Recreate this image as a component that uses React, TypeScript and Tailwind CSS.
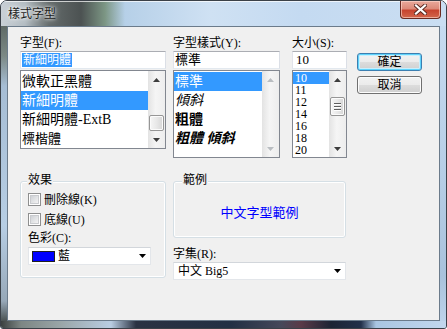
import React from 'react';

const ui = "font-['Liberation_Serif','Noto_Sans_CJK_TC',serif]";

function Arrow({ dir, color }: { dir: 'up' | 'down'; color: string }) {
  return (
    <svg width="7" height="4" viewBox="0 0 7 4">
      <path d={dir === 'up' ? 'M0 4L3.5 0L7 4Z' : 'M0 0L3.5 4L7 0Z'} fill={color} />
    </svg>
  );
}

function ScrollBar({ disabled, thumb, grip }: { disabled?: boolean; thumb?: string; grip?: boolean }) {
  const c = disabled ? '#b9bdc1' : '#3d3d3d';
  return (
    <div className="w-[17px] flex flex-col bg-[linear-gradient(90deg,#e3e3e3,#f5f5f5_45%,#ededed)]">
      <div className="h-[17px] flex items-center justify-center">
        <Arrow dir="up" color={c} />
      </div>
      <div className="flex-1 flex flex-col">
        {thumb && (
          <div
            className={`${thumb} mx-px rounded-[2px] border border-[#969696] bg-[linear-gradient(90deg,#f6f6f6,#e8e8e8_50%,#d6d6d6)] shadow-[inset_0_0_0_1px_#fbfbfb] flex flex-col items-center justify-center gap-[2px]`}
          >
            {grip && (
              <>
                <div className="w-[7px] h-px bg-[#5e5e5e] shadow-[0_1px_0_#fff]" />
                <div className="w-[7px] h-px bg-[#5e5e5e] shadow-[0_1px_0_#fff]" />
                <div className="w-[7px] h-px bg-[#5e5e5e] shadow-[0_1px_0_#fff]" />
              </>
            )}
          </div>
        )}
      </div>
      <div className="h-[17px] flex items-center justify-center">
        <Arrow dir="down" color={c} />
      </div>
    </div>
  );
}

const inputBox =
  'h-[18px] bg-white border border-[#abadb3] border-l-[#e2e3ea] border-r-[#dbdfe6] border-b-[#e3e9ef] flex items-center';

function CheckRow({ label, className }: { label: string; className?: string }) {
  return (
    <div className={`h-[13px] flex items-center gap-[3px] ${className ?? ''}`}>
      <div className="w-[13px] h-[13px] border border-[#8e8f8f] bg-white p-[1px]">
        <div className="w-full h-full border border-[#c9cbce] bg-[linear-gradient(135deg,#cfd2d6,#f3f3f3)]" />
      </div>
      <span className="text-[12px] leading-[14px]">{label}</span>
    </div>
  );
}

function Combo({ className, children }: { className: string; children: React.ReactNode }) {
  return (
    <div className={`${className} h-[18px] bg-white border border-[#e3e6ea] border-t-[#d2d6db] flex items-center`}>
      <div className="flex-1 flex items-center">{children}</div>
      <div className="w-[16px] flex justify-center">
        <svg width="7" height="4" viewBox="0 0 7 4">
          <path d="M0 0L3.5 4L7 0Z" fill="#000" />
        </svg>
      </div>
    </div>
  );
}

const sizes = ['10', '11', '12', '14', '16', '18', '20'];

export default function App() {
  return (
    <div
      className={`${ui} w-[447px] h-[329px] flex flex-col overflow-hidden rounded-t-[7px] rounded-b-[3px] border border-[#3b4148] bg-[#bcd3ea] text-black`}
    >
      {/* Title bar */}
      <div className="h-[25px] flex items-start bg-[linear-gradient(90deg,#c9d0d6_0px,#b3bcc2_24px,#646b6b_48px,#4c5252_80px,#7c9684_104px,#b6d0e8_124px,#cfe1f3_210px,#c4daf1_300px,#cadef2_445px)] shadow-[inset_0_1px_0_rgba(255,255,255,0.7)]">
        <div className="pl-[7px] pt-[5px] text-[12px] leading-[14px] font-['Noto_Sans_CJK_TC',sans-serif] text-[#1c1c1c] [text-shadow:0_0_6px_#ffffff,0_0_3px_#ffffff]">
          樣式字型
        </div>
        <div className="ml-auto mr-[5px] w-[41px] h-[18px] rounded-b-[4px] border border-t-0 border-[#6a2b22] bg-[linear-gradient(180deg,#e9a99b_0%,#dc8a79_45%,#c7442f_55%,#d2664c_100%)] shadow-[inset_0_0_0_1px_rgba(255,220,210,0.6)] flex items-center justify-center">
          <svg width="13" height="11" viewBox="0 0 13 11">
            <path d="M2 1.5L11 9.5M11 1.5L2 9.5" stroke="#5a2a22" strokeWidth="4" strokeLinecap="square" />
            <path d="M2 1.5L11 9.5M11 1.5L2 9.5" stroke="#ffffff" strokeWidth="2.2" strokeLinecap="square" />
          </svg>
        </div>
      </div>

      {/* Middle: frame sides + client */}
      <div className="flex-1 flex">
        <div className="w-[6px] bg-[linear-gradient(180deg,#5f6a66_0px,#7c8985_30px,#a6bdd4_60px,#b7cee4_200px,#97a8b8_275px,#4a5252_295px)]" />
        <div className="flex-1 border border-[#6b7b8b] bg-[#f0f0f0] flex flex-col pl-[12px] pt-[8px]">
          {/* Top row */}
          <div className="flex items-start">
            {/* Font */}
            <div className="w-[146px] flex flex-col">
              <div className="h-[16px] text-[12px] leading-[16px]">字型(F):</div>
              <div className={`${inputBox} pl-[1px]`}>
                <span className="bg-[#3399ff] text-white text-[12px] leading-[14px] px-px">新細明體</span>
              </div>
              <div className="mt-[1px] h-[79px] border border-[#828790] bg-white flex">
                <div className="flex-1 flex flex-col pt-px text-[14px]">
                  <div className="h-[19px] leading-[19px] pl-[1px]">微軟正黑體</div>
                  <div className="h-[19px] leading-[19px] pl-[1px] bg-[#3399ff] text-white">新細明體</div>
                  <div className="h-[19px] leading-[19px] pl-[1px]">新細明體-ExtB</div>
                  <div className="h-[19px] leading-[19px] pl-[1px] text-[13px]">標楷體</div>
                </div>
                <ScrollBar thumb="mt-[27px] h-[16px]" />
              </div>
            </div>

            {/* Style */}
            <div className="ml-[7px] w-[107px] flex flex-col">
              <div className="h-[16px] text-[12px] leading-[16px]">字型樣式(Y):</div>
              <div className={`${inputBox} pl-[1px]`}>
                <span className="text-[13px] leading-[14px]">標準</span>
              </div>
              <div className="mt-[1px] h-[88px] border border-[#828790] bg-white flex">
                <div className="flex-1 flex flex-col pt-px text-[14px]">
                  <div className="h-[19px] leading-[19px] pl-[1px] bg-[#3399ff] text-white">標準</div>
                  <div className="h-[19px] leading-[19px] pl-[1px] italic">傾斜</div>
                  <div className="h-[19px] leading-[19px] pl-[1px] font-bold">粗體</div>
                  <div className="h-[19px] leading-[19px] pl-[1px] font-bold italic">粗體 傾斜</div>
                </div>
                <ScrollBar disabled />
              </div>
            </div>

            {/* Size */}
            <div className="ml-[12px] w-[55px] flex flex-col">
              <div className="h-[16px] text-[12px] leading-[16px]">大小(S):</div>
              <div className={`${inputBox} pl-[3px]`}>
                <span className="text-[13px] leading-[14px]">10</span>
              </div>
              <div className="mt-[1px] h-[88px] border border-[#828790] bg-white flex">
                <div className="flex-1 flex flex-col pt-px text-[12px]">
                  {sizes.map((s, i) => (
                    <div
                      key={s}
                      className={`h-[12px] leading-[12px] pl-[2px] overflow-hidden ${i === 0 ? 'bg-[#3399ff] text-white' : ''}`}
                    >
                      {s}
                    </div>
                  ))}
                </div>
                <ScrollBar thumb="mt-[9px] h-[19px]" grip />
              </div>
            </div>

            {/* Buttons */}
            <div className="ml-[10px] w-[65px] flex flex-col pt-[18px]">
              <button className="h-[18px] rounded-[3px] border border-[#3c7fb1] bg-[linear-gradient(180deg,#f2f2f2_0%,#ebebeb_50%,#dddddd_50%,#cfcfcf_100%)] shadow-[inset_0_0_0_1px_#5fd3fb,inset_0_0_0_2px_#c8effd] text-[12px] leading-[14px]">
                確定
              </button>
              <button className="mt-[5px] h-[18px] rounded-[3px] border border-[#707070] bg-[linear-gradient(180deg,#f2f2f2_0%,#ebebeb_50%,#dddddd_50%,#cfcfcf_100%)] shadow-[inset_0_0_0_1px_#fcfcfc] text-[12px] leading-[14px]">
                取消
              </button>
            </div>
          </div>

          {/* Bottom row */}
          <div className="mt-[23px] flex items-start">
            {/* Effects */}
            <div className="relative w-[146px] h-[97px] rounded-[3px] border border-[#d5dfe5] shadow-[inset_0_0_0_1px_#ffffff] pl-[7px] pt-[11px]">
              <span className="absolute left-[6px] top-[-9px] bg-[#f0f0f0] px-px text-[12px] leading-[14px]">效果</span>
              <CheckRow label="刪除線(K)" />
              <CheckRow label="底線(U)" className="mt-[7px]" />
              <div className="mt-[5px] h-[14px] text-[12px] leading-[14px]">色彩(C):</div>
              <Combo className="mt-[2px] w-[123px]">
                <div className="ml-[3px] w-[23px] h-[11px] border border-[#202020] bg-[#0000ff]" />
                <span className="ml-[3px] text-[12px] leading-[14px]">藍</span>
              </Combo>
            </div>

            {/* Sample */}
            <div className="ml-[7px] w-[173px] flex flex-col">
              <div className="relative h-[57px] rounded-[3px] border border-[#d5dfe5] shadow-[inset_0_0_0_1px_#ffffff] flex items-center justify-center pt-[6px]">
                <span className="absolute left-[8px] top-[-9px] bg-[#f0f0f0] px-px text-[12px] leading-[14px]">範例</span>
                <span className="text-[13px] leading-[14px] text-[#0000ff]">中文字型範例</span>
              </div>
              <div className="mt-[9px] h-[14px] text-[12px] leading-[14px]">字集(R):</div>
              <Combo className="mt-[1px] w-[173px]">
                <span className="ml-[4px] text-[12px] leading-[14px]">中文 Big5</span>
              </Combo>
            </div>
          </div>
        </div>
        <div className="w-[6px] bg-[linear-gradient(180deg,#c6dbf0_0px,#b6cee6_150px,#a9c2dc_250px,#bcd3ea_295px)]" />
      </div>

      {/* Bottom frame */}
      <div className="h-[7px] bg-[linear-gradient(90deg,#3a4040_0px,#7d8684_20px,#9aa6a8_60px,#b9cde2_110px,#2a3242_135px,#223044_230px,#46485a_280px,#5a3a48_300px,#1c2434_330px,#22304a_360px,#a9c6e2_375px,#c3d8ee_447px)]" />
    </div>
  );
}
